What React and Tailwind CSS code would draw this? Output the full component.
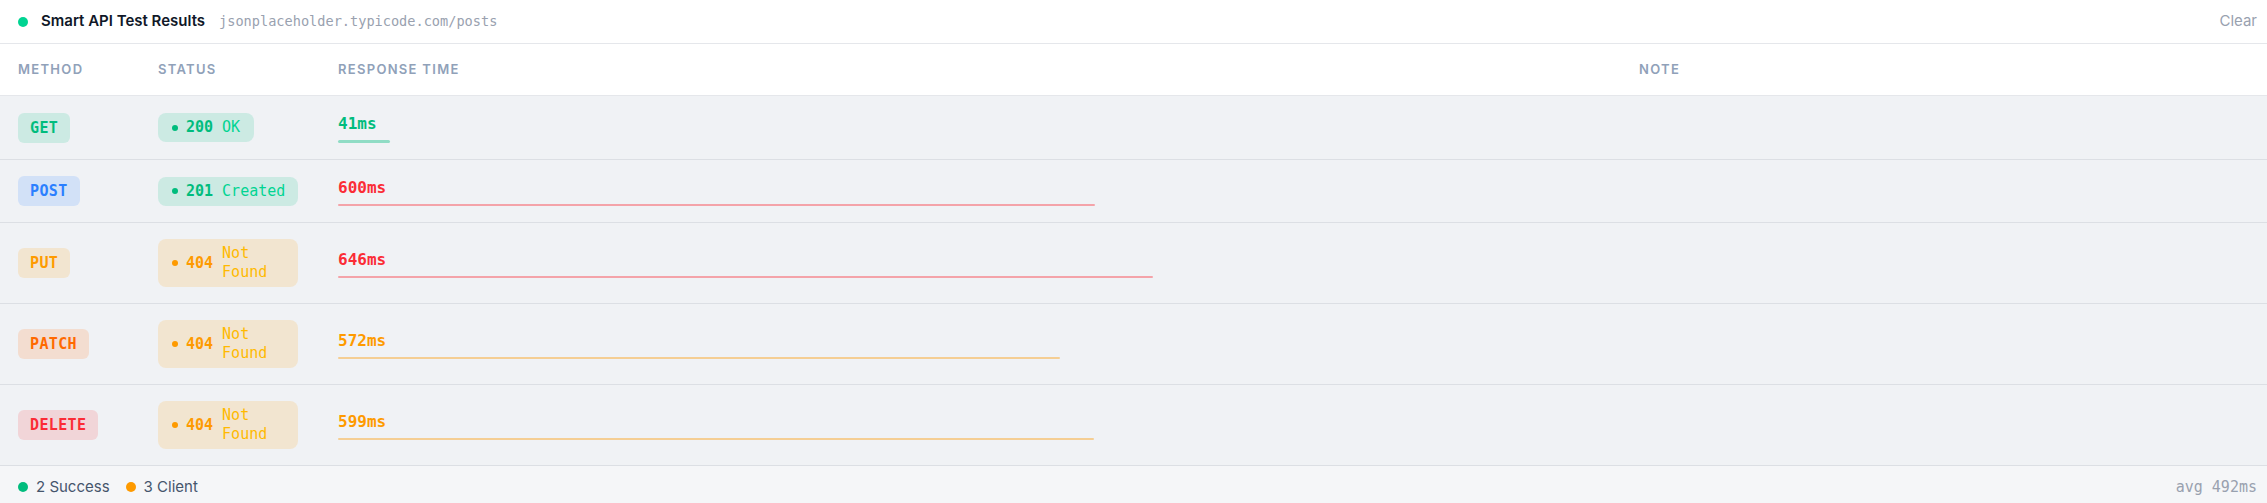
const rows = [
	{ method: "GET", code: 200, msg: "OK", ms: 41 },
	{ method: "POST", code: 201, msg: "Created", ms: 600 },
	{ method: "PUT", code: 404, msg: "Not Found", ms: 646 },
	{ method: "PATCH", code: 404, msg: "Not Found", ms: 572 },
	{ method: "DELETE", code: 404, msg: "Not Found", ms: 599 },
];

const methodStyles = {
	GET: "bg-emerald-500/15 text-emerald-500",
	POST: "bg-blue-500/15 text-blue-500",
	PUT: "bg-amber-500/15 text-amber-500",
	PATCH: "bg-orange-500/15 text-orange-500",
	DELETE: "bg-red-500/15 text-red-500",
};

const statusStyles = {
	ok: {
		badge: "bg-emerald-500/15",
		dot: "bg-emerald-500",
		code: "text-emerald-500",
		msg: "text-emerald-400",
	},
	client: {
		badge: "bg-amber-500/15",
		dot: "bg-amber-500",
		code: "text-amber-500",
		msg: "text-amber-400",
	},
};

// colour of the timing text + bar
function timing(ms) {
	if (ms < 300)
		return { text: "text-emerald-500", bar: "h-[3px] bg-emerald-500/40" };
	if (ms < 600) return { text: "text-amber-500", bar: "h-[2px] bg-amber-500/40" };
	return { text: "text-red-500", bar: "h-[2px] bg-red-500/40" };
}

const cols = "grid grid-cols-[140px_180px_1301px_1fr]";
const mono = "font-['DejaVu_Sans_Mono',monospace]";

export default function App() {
	const max = Math.max(...rows.map((r) => r.ms));
	const avg = Math.round(rows.reduce((a, r) => a + r.ms, 0) / rows.length);
	const success = rows.filter((r) => r.code < 300).length;
	const client = rows.filter((r) => r.code >= 400).length;

	return (
		<div className="w-full bg-white font-['Inter',sans-serif]">
			{/* Header */}
			<div className="flex h-11 items-center border-b border-[#e5e7eb] pl-[18px] pr-[10px]">
				<span className="h-2.5 w-2.5 rounded-full bg-emerald-400" />
				<span className="ml-[13px] text-[15px] font-semibold text-gray-900">
					Smart API Test Results
				</span>
				<span className={`ml-[14px] text-[13.6px] text-gray-400 ${mono}`}>
					jsonplaceholder.typicode.com/posts
				</span>
				<button className="ml-auto text-[15px] text-gray-400">Clear</button>
			</div>

			{/* Column titles */}
			<div
				className={`${cols} h-[52px] items-center border-b border-[#e5e7eb] text-[13px] font-semibold uppercase tracking-[0.1em] text-slate-400`}
			>
				<div className="pl-[18px]">Method</div>
				<div className="pl-[18px]">Status</div>
				<div className="pl-[18px]">Response Time</div>
				<div className="pl-[18px]">Note</div>
			</div>

			{/* Rows */}
			<div className="bg-[#f0f2f5]">
				{rows.map((r) => {
					const s = r.code < 300 ? statusStyles.ok : statusStyles.client;
					const t = timing(r.ms);
					return (
						<div
							key={r.method}
							className={`${cols} items-center border-b border-[#dcdfe4] py-4`}
						>
							<div className="pl-[18px]">
								<span
									className={`inline-block rounded-md px-3 py-[5px] text-[15px] leading-5 font-bold tracking-wide ${mono} ${methodStyles[r.method]}`}
								>
									{r.method}
								</span>
							</div>
							<div className="pl-[18px]">
								<span
									className={`inline-flex max-w-[140px] items-center rounded-lg px-[14px] py-[5px] text-[15px] leading-[19px] ${mono} ${s.badge}`}
								>
									<span className={`mr-2 h-1.5 w-1.5 shrink-0 rounded-full ${s.dot}`} />
									<span className={`mr-[9px] shrink-0 font-bold ${s.code}`}>{r.code}</span>
									<span className={s.msg}>{r.msg}</span>
								</span>
							</div>
							<div className="flex flex-col gap-1 pl-[18px]">
								<span className={`text-[16px] leading-6 font-bold ${mono} ${t.text}`}>
									{r.ms}ms
								</span>
								<div
									className={`rounded-full ${t.bar}`}
									style={{ width: `${(r.ms / max) * 815}px` }}
								/>
							</div>
							<div />
						</div>
					);
				})}
			</div>

			{/* Footer */}
			<div className="flex items-center justify-between bg-[#f5f6f8] py-[10px] pl-[18px] pr-[10px] text-[15px] leading-[22px]">
				<div className="flex items-center gap-4 text-slate-600">
					<span className="flex items-center gap-2">
						<span className="h-2.5 w-2.5 rounded-full bg-emerald-500" />
						{success} Success
					</span>
					<span className="flex items-center gap-2">
						<span className="h-2.5 w-2.5 rounded-full bg-amber-500" />
						{client} Client
					</span>
				</div>
				<span className={`text-gray-400 ${mono}`}>avg {avg}ms</span>
			</div>
		</div>
	);
}
